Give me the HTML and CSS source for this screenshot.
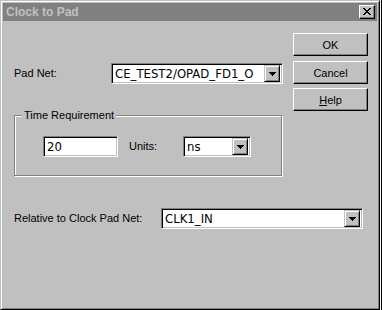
FILE: index.html
```html
<!DOCTYPE html>
<html lang="en">

<head>
    <meta charset="UTF-8">
    <title>Clock to Pad</title>
    <link rel="stylesheet" href="styles.css">
</head>

<body>
    <div class="window">
        <div class="titlebar">
            <span class="title">Clock to Pad</span>
            <button class="close-btn" type="button">
                <svg width="8" height="7" viewBox="0 0 8 7" shape-rendering="crispEdges">
                    <path d="M0 0h2v1h-2z M6 0h2v1h-2z M1 1h2v1h-2z M5 1h2v1h-2z M2 2h4v1h-4z M3 3h2v1h-2z M2 4h4v1h-4z M1 5h2v1h-2z M5 5h2v1h-2z M0 6h2v1h-2z M6 6h2v1h-2z" fill="#000"/>
                </svg>
            </button>
        </div>

        <div class="client">
            <div class="top">
                <div class="fields">
                    <div class="row pad-net-row">
                        <span class="label pad-net-label">Pad Net:</span>
                        <div class="combo pad-net-combo">
                            <span class="combo-text">CE_TEST2/OPAD_FD1_O</span>
                            <span class="drop-btn">
                                <svg width="7" height="4" viewBox="0 0 7 4" shape-rendering="crispEdges"><path d="M0 0h7v1h-1v1h-1v1h-1v1h-1v-1h-1v-1h-1v-1h-1z" fill="#000"/></svg>
                            </span>
                        </div>
                    </div>

                    <fieldset class="group">
                        <legend class="group-label">Time Requirement</legend>
                        <div class="row group-row">
                            <div class="edit">20</div>
                            <span class="label units-label">Units:</span>
                            <div class="combo units-combo">
                                <span class="combo-text">ns</span>
                                <span class="drop-btn">
                                    <svg width="7" height="4" viewBox="0 0 7 4" shape-rendering="crispEdges"><path d="M0 0h7v1h-1v1h-1v1h-1v1h-1v-1h-1v-1h-1v-1h-1z" fill="#000"/></svg>
                                </span>
                            </div>
                        </div>
                    </fieldset>
                </div>

                <div class="buttons">
                    <button class="push-btn" type="button">OK</button>
                    <button class="push-btn cancel-btn" type="button">Cancel</button>
                    <button class="push-btn help-btn" type="button"><u>H</u>elp</button>
                </div>
            </div>

            <div class="row relative-row">
                <span class="label relative-label">Relative to Clock Pad Net:</span>
                <div class="combo relative-combo">
                    <span class="combo-text">CLK1_IN</span>
                    <span class="drop-btn">
                        <svg width="7" height="4" viewBox="0 0 7 4" shape-rendering="crispEdges"><path d="M0 0h7v1h-1v1h-1v1h-1v1h-1v-1h-1v-1h-1v-1h-1z" fill="#000"/></svg>
                    </span>
                </div>
            </div>
        </div>
    </div>
    <div class="backdrop-edge"></div>
</body>

</html>
```

FILE: styles.css
```css
body {
    margin: 0;
    display: flex;
    height: 310px;
    overflow: hidden;
    background: #fff;
    font-family: "Liberation Sans", Arial, sans-serif;
    font-size: 11px;
    color: #000;
}

/* dialog frame: 2px bevel + 1px face */
.window {
    box-sizing: border-box;
    width: 380px;
    height: 310px;
    padding: 2px;
    background: #c0c0c0;
    border: 1px solid;
    border-color: #c0c0c0 #000 #000 #c0c0c0;
    box-shadow: inset 1px 1px 0 #fff, inset -1px -1px 0 #808080;
    display: flex;
    flex-direction: column;
}

.backdrop-edge {
    width: 1px;
    border-right: 1px solid #000;
}

.titlebar {
    height: 18px;
    background: #808080;
    display: flex;
    align-items: center;
    padding-left: 3px;
    padding-right: 2px;
}

.title {
    flex: 1;
    font-size: 12px;
    font-weight: bold;
    color: #c0c0c0;
    line-height: 18px;
}

.close-btn {
    box-sizing: border-box;
    width: 16px;
    height: 14px;
    padding: 0;
    background: #c0c0c0;
    border: 1px solid;
    border-color: #fff #000 #000 #fff;
    box-shadow: inset -1px -1px 0 #808080;
    display: flex;
    align-items: center;
    justify-content: center;
}

.close-btn svg {
    display: block;
    margin-top: -1px;
}

.client {
    flex: 1;
    padding: 12px 0 0 11px;
}

.top {
    display: flex;
    align-items: flex-start;
}

.fields {
    width: 269px;
}

.row {
    display: flex;
    align-items: center;
}

.label {
    line-height: 13px;
}

.pad-net-row {
    margin-top: 30px;
}

.pad-net-label {
    width: 97px;
}

/* sunken combo / edit boxes */
.combo,
.edit {
    box-sizing: border-box;
    height: 21px;
    background: #fff;
    border: 1px solid;
    border-color: #808080 #fff #fff #808080;
    box-shadow: inset 1px 1px 0 #000, inset -1px -1px 0 #c0c0c0;
    padding: 2px;
    display: flex;
    align-items: center;
    font-family: "Liberation Sans Narrow", "DejaVu Sans Condensed", "Liberation Sans", sans-serif;
    font-size: 13px;
}

.combo-text {
    flex: 1;
    padding-left: 1px;
    line-height: 17px;
}

.drop-btn {
    box-sizing: border-box;
    width: 16px;
    height: 17px;
    background: #c0c0c0;
    border: 1px solid;
    border-color: #c0c0c0 #000 #000 #c0c0c0;
    box-shadow: inset 1px 1px 0 #fff, inset -1px -1px 0 #808080;
    display: flex;
    align-items: center;
    justify-content: center;
}

.drop-btn svg {
    display: block;
}

.pad-net-combo {
    width: 172px;
}

/* etched group box */
.group {
    box-sizing: border-box;
    width: 268px;
    margin: 25px 0 0 0;
    padding: 0;
    border: 1px solid #808080;
    box-shadow: 1px 1px 0 #fff, inset 1px 1px 0 #fff;
}

.group-label {
    margin-left: 7px;
    padding: 0 2px;
    line-height: 13px;
    background: #c0c0c0;
}

.group-row {
    padding: 14px 0 18px 28px;
}

.edit {
    width: 75px;
    padding-left: 3px;
}

.units-label {
    margin-left: 11px;
    width: 54px;
}

.units-combo {
    width: 68px;
}

.buttons {
    margin-left: 10px;
    display: flex;
    flex-direction: column;
}

.push-btn {
    box-sizing: border-box;
    width: 75px;
    height: 23px;
    padding: 0;
    background: #c0c0c0;
    border: 1px solid;
    border-color: #fff #000 #000 #fff;
    box-shadow: inset -1px -1px 0 #808080;
    font-family: "Liberation Sans", Arial, sans-serif;
    font-size: 11px;
    color: #000;
}

.cancel-btn {
    margin-top: 5px;
}

.help-btn {
    margin-top: 4px;
}

.relative-row {
    margin-top: 32px;
}

.relative-label {
    width: 147px;
}

.relative-combo {
    width: 202px;
}
```
